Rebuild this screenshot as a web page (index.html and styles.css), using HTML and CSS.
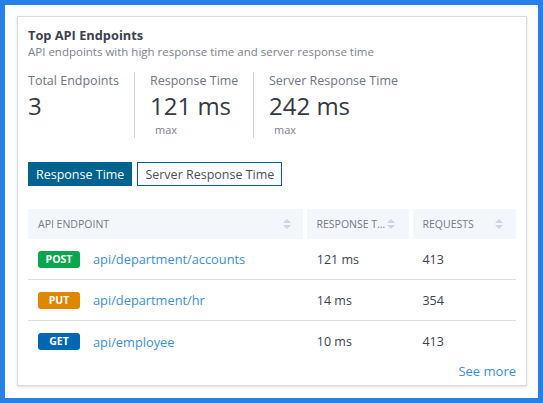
FILE: index.html
```html
<!DOCTYPE html>
<html>
<head>
<meta charset="utf-8">
<link rel="stylesheet" href="styles.css">
</head>
<body>
<div class="frame">
  <div class="card">
    <div class="title">Top API Endpoints</div>
    <div class="subtitle">API endpoints with high response time and server response time</div>
    <div class="stats">
      <div class="stat stat-first">
        <div class="stat-label">Total Endpoints</div>
        <div class="stat-value">3</div>
      </div>
      <div class="stat stat-mid">
        <div class="stat-label">Response Time</div>
        <div class="stat-value">121 ms</div>
        <div class="stat-unit">max</div>
      </div>
      <div class="stat stat-last">
        <div class="stat-label">Server Response Time</div>
        <div class="stat-value">242 ms</div>
        <div class="stat-unit">max</div>
      </div>
    </div>
    <div class="tabs">
      <button class="tab tab-active">Response Time</button>
      <button class="tab">Server Response Time</button>
    </div>
    <div class="table">
      <div class="thead">
        <div class="th th-endpoint"><span class="th-text">API ENDPOINT</span><span class="sort"></span></div>
        <div class="th th-resp"><span class="th-text">RESPONSE T…</span><span class="sort"></span></div>
        <div class="th th-req"><span class="th-text">REQUESTS</span><span class="sort"></span></div>
      </div>
      <div class="tr">
        <div class="td td-endpoint"><span class="badge badge-post">POST</span><a class="link">api/department/accounts</a></div>
        <div class="td td-resp">121 ms</div>
        <div class="td td-req">413</div>
      </div>
      <div class="tr">
        <div class="td td-endpoint"><span class="badge badge-put">PUT</span><a class="link">api/department/hr</a></div>
        <div class="td td-resp">14 ms</div>
        <div class="td td-req">354</div>
      </div>
      <div class="tr tr-last">
        <div class="td td-endpoint"><span class="badge badge-get">GET</span><a class="link">api/employee</a></div>
        <div class="td td-resp">10 ms</div>
        <div class="td td-req">413</div>
      </div>
    </div>
    <div class="footer"><a class="see-more">See more</a></div>
  </div>
</div>
</body>
</html>
```
FILE: styles.css
```css
html, body {
  margin: 0;
  padding: 0;
}
body {
  font-family: "Open Sans", "Noto Sans", sans-serif;
  color: #3a3f4c;
}
.frame {
  width: 543px;
  height: 403px;
  box-sizing: border-box;
  border: 5px solid #2680e6;
  background: #fff;
  padding: 11px 11px 13px 12px;
}
.card {
  box-sizing: border-box;
  height: 370px;
  border: 1px solid #dcdcdc;
  box-shadow: 0 1px 3px rgba(0,0,0,0.12);
  padding: 10px 10px 0 10px;
}
.title {
  font-size: 12.8px;
  font-weight: 700;
  line-height: 17px;
  color: #3c4150;
}
.subtitle {
  font-size: 11.5px;
  line-height: 15px;
  color: #7c8290;
}
.stats {
  display: flex;
  margin-top: 13px;
  height: 66px;
}
.stat {
  box-sizing: border-box;
}
.stat-first {
  width: 106px;
}
.stat-mid {
  width: 120px;
  border-left: 1px solid #d3d5da;
  border-right: 1px solid #d3d5da;
  padding-left: 15px;
}
.stat-last {
  padding-left: 15px;
}
.stat-label {
  font-size: 12.5px;
  line-height: 18px;
  color: #6f7584;
  white-space: nowrap;
}
.stat-value {
  font-size: 24px;
  line-height: 32px;
  color: #343945;
  white-space: nowrap;
}
.stat-unit {
  font-size: 11px;
  line-height: 16px;
  color: #7c8290;
  padding-left: 5px;
}
.tabs {
  display: flex;
  gap: 5px;
  margin-top: 24px;
}
.tab {
  font-family: "Open Sans", "Noto Sans", sans-serif;
  font-size: 12.5px;
  height: 24px;
  padding: 0 7px;
  border: 1px solid #00628f;
  background: #fff;
  color: #4a5060;
  margin: 0;
}
.tab-active {
  background: #00628f;
  color: #fff;
}
.table {
  margin-top: 23px;
}
.thead {
  display: flex;
  gap: 4px;
  height: 30px;
}
.th {
  display: flex;
  align-items: center;
  background: #f3f6fa;
  padding: 0 10px;
  box-sizing: border-box;
  font-size: 10.5px;
  color: #737988;
}
.th-text {
  flex: 1;
  white-space: nowrap;
}
.sort {
  position: relative;
  width: 8px;
  height: 10px;
  margin-left: 2px;
}
.sort::before, .sort::after {
  content: "";
  position: absolute;
  left: 0;
  border-left: 4px solid transparent;
  border-right: 4px solid transparent;
}
.sort::before {
  top: 0;
  border-bottom: 4px solid #d0d4db;
}
.sort::after {
  bottom: 0;
  border-top: 4px solid #d0d4db;
}
.th-endpoint, .td-endpoint { width: 276px; }
.th-resp, .td-resp { width: 102px; }
.th-req, .td-req { width: 104px; }
.th-endpoint .sort { margin-right: 2px; }
.th-resp { padding-right: 16px; }
.th-resp .th-text { flex: none; }
.th-req .sort { margin-right: 3px; }
.tr {
  display: flex;
  gap: 4px;
  height: 41px;
  align-items: center;
  border-bottom: 1px solid #d9dce3;
  box-sizing: border-box;
}
.tr-last {
  border-bottom: none;
}
.td {
  box-sizing: border-box;
  padding: 0 10px;
  font-size: 12.5px;
  color: #3e4350;
  display: flex;
  align-items: center;
}
.badge {
  display: inline-block;
  width: 42px;
  height: 17px;
  line-height: 17px;
  border-radius: 3px;
  text-align: center;
  color: #fff;
  font-size: 10.5px;
  font-weight: 700;
  margin-right: 13px;
}
.badge-post { background: #0aa64e; }
.badge-put { background: #e08700; }
.badge-get { background: #0068b3; }
.link {
  font-size: 12.8px;
  color: #3a8fdc;
}
.footer {
  display: flex;
  justify-content: flex-end;
}
.see-more {
  font-size: 13px;
  color: #3a8fdc;
  line-height: 18px;
}
```
